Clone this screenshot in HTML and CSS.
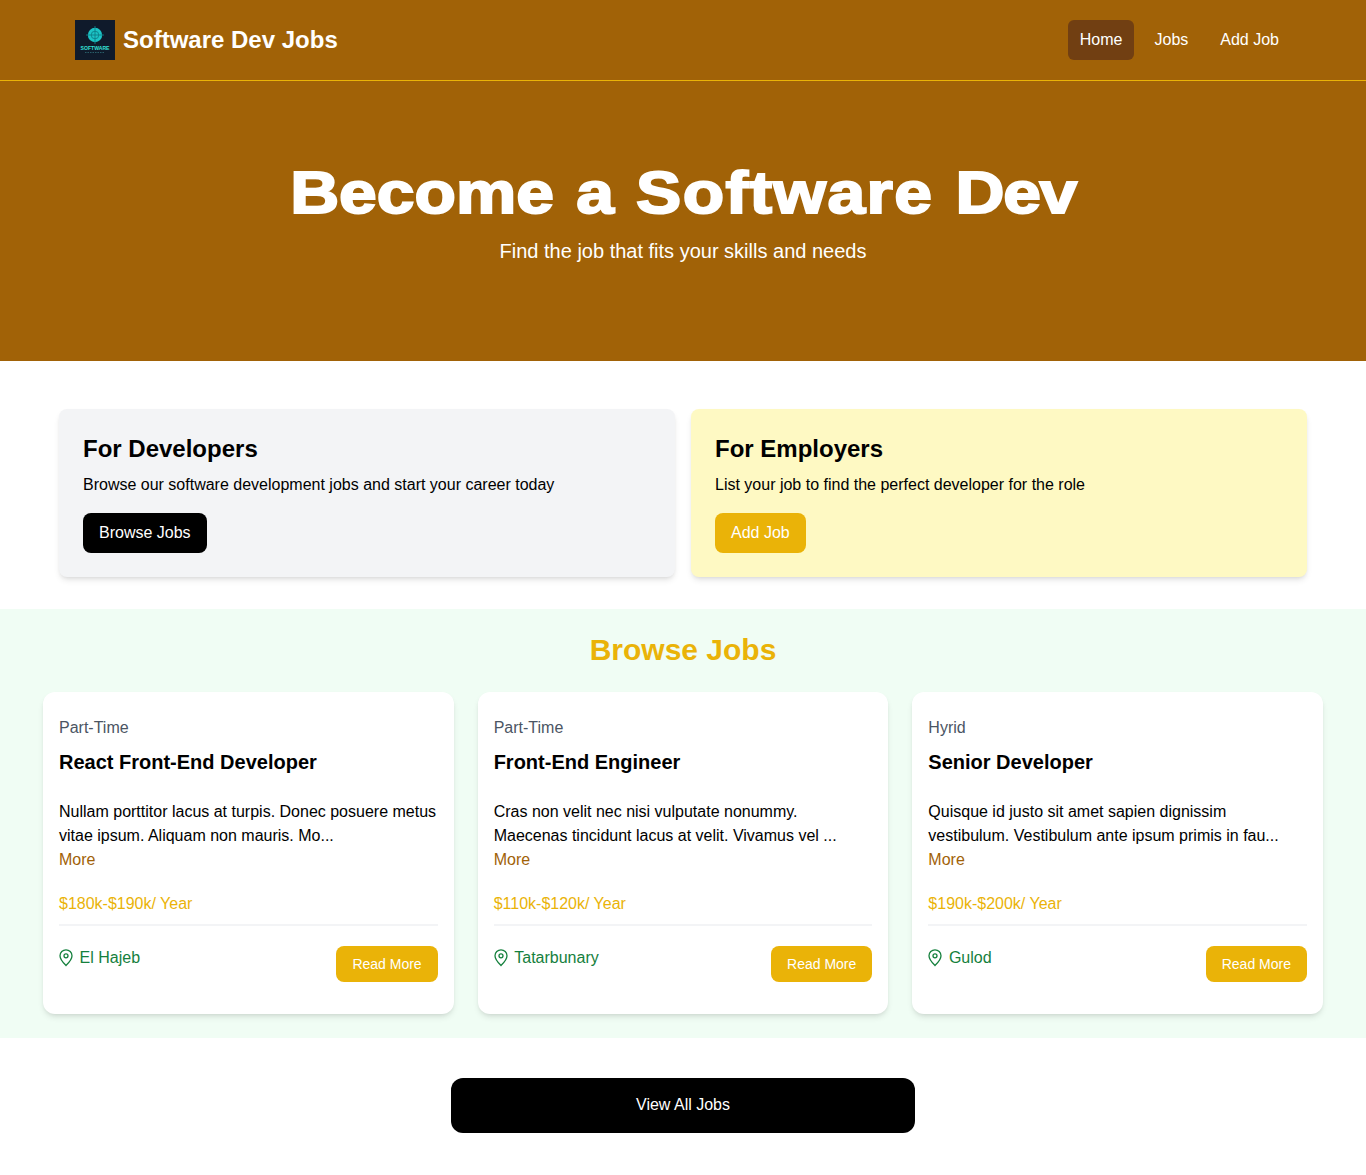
FILE: index.html
```html
<!DOCTYPE html>
<html lang="en">
<head>
  <meta charset="UTF-8">
  <title>Software Dev Jobs</title>
  <meta name="viewport" content="width=device-width, initial-scale=1.0">
  <link rel="stylesheet" href="styles.css">
</head>
<body>
  <nav class="navbar">
    <div class="nav-inner">
      <a class="brand" href="#">
        <svg class="logo" viewBox="0 0 40 40" width="40" height="40">
          <rect width="40" height="40" fill="#0f1a2b"/>
          <circle cx="20" cy="15" r="7.200" fill="#1cc4c6"/>
          <circle cx="20" cy="15" r="3.800" fill="none" stroke="#0d7f88" stroke-width="0.900"/>
          <path d="M20 6v18M11 15h18" stroke="#0d7f88" stroke-width="0.900"/>
          <text class="logo-text" x="20" y="29.500" text-anchor="middle" textLength="29" lengthAdjust="spacingAndGlyphs">SOFTWARE</text>
          <path d="M10 32.500h20" stroke="#2f6f78" stroke-width="0.800" stroke-dasharray="1.500 1"/>
        </svg>
        <span class="brand-name">Software Dev Jobs</span>
      </a>
      <div class="nav-links">
        <a class="nav-link active" href="#">Home</a>
        <a class="nav-link" href="#">Jobs</a>
        <a class="nav-link" href="#">Add Job</a>
      </div>
    </div>
  </nav>

  <section class="hero">
    <h1>Become a <span class="wide">Software</span> <span class="tight">Dev</span></h1>
    <p>Find the job that fits your skills and needs</p>
  </section>

  <section class="cards">
    <div class="info-card gray">
      <h2>For Developers</h2>
      <p>Browse our software development jobs and start your career today</p>
      <a class="btn btn-black" href="#">Browse Jobs</a>
    </div>
    <div class="info-card yellow">
      <h2>For Employers</h2>
      <p>List your job to find the perfect developer for the role</p>
      <a class="btn btn-yellow" href="#">Add Job</a>
    </div>
  </section>

  <section class="browse">
    <h2>Browse Jobs</h2>
    <div class="job-grid">
      <div class="job">
        <div class="job-type">Part-Time</div>
        <h3>React Front-End Developer</h3>
        <p class="job-desc">Nullam porttitor lacus at turpis. Donec posuere metus vitae ipsum. Aliquam non mauris. Mo...</p>
        <a class="more" href="#">More</a>
        <div class="salary">$180k-$190k/ Year</div>
        <div class="job-footer">
          <div class="location">
            <svg viewBox="0 0 14 18" width="14" height="18"><path d="M7 16.500C5.300 14.800 1 10.900 1 6.800a6 6 0 0 1 12 0c0 4.100-4.300 8-6 9.700z"/><circle cx="7" cy="6.800" r="2"/></svg>
            El Hajeb
          </div>
          <a class="read-more" href="#">Read More</a>
        </div>
      </div>
      <div class="job">
        <div class="job-type">Part-Time</div>
        <h3>Front-End Engineer</h3>
        <p class="job-desc">Cras non velit nec nisi vulputate nonummy. Maecenas tincidunt lacus at velit. Vivamus vel ...</p>
        <a class="more" href="#">More</a>
        <div class="salary">$110k-$120k/ Year</div>
        <div class="job-footer">
          <div class="location">
            <svg viewBox="0 0 14 18" width="14" height="18"><path d="M7 16.500C5.300 14.800 1 10.900 1 6.800a6 6 0 0 1 12 0c0 4.100-4.300 8-6 9.700z"/><circle cx="7" cy="6.800" r="2"/></svg>
            Tatarbunary
          </div>
          <a class="read-more" href="#">Read More</a>
        </div>
      </div>
      <div class="job">
        <div class="job-type">Hyrid</div>
        <h3>Senior Developer</h3>
        <p class="job-desc">Quisque id justo sit amet sapien dignissim vestibulum. Vestibulum ante ipsum primis in fau...</p>
        <a class="more" href="#">More</a>
        <div class="salary">$190k-$200k/ Year</div>
        <div class="job-footer">
          <div class="location">
            <svg viewBox="0 0 14 18" width="14" height="18"><path d="M7 16.500C5.300 14.800 1 10.900 1 6.800a6 6 0 0 1 12 0c0 4.100-4.300 8-6 9.700z"/><circle cx="7" cy="6.800" r="2"/></svg>
            Gulod
          </div>
          <a class="read-more" href="#">Read More</a>
        </div>
      </div>
    </div>
  </section>

  <section class="view-all">
    <a class="view-all-btn" href="#">View All Jobs</a>
  </section>
</body>
</html>
```

FILE: styles.css
```css
* {
  box-sizing: border-box;
  margin: 0;
  padding: 0;
}

body {
  font-family: "Liberation Sans", Arial, sans-serif;
  font-size: 16px;
  line-height: 24px;
  color: #000;
  background: #fff;
}

a {
  text-decoration: none;
  color: inherit;
}

.navbar {
  background: #a16207;
  border-bottom: 1px solid #eab308;
}

.nav-inner {
  max-width: 1280px;
  margin: 0 auto;
  padding: 0 32px;
  height: 80px;
  display: flex;
  align-items: center;
  justify-content: space-between;
}

.brand {
  display: flex;
  align-items: center;
}

.logo {
  display: block;
  margin-right: 8px;
}

.logo-text {
  font-family: "Liberation Sans", Arial, sans-serif;
  font-size: 5px;
  font-weight: 700;
  fill: #35e0d8;
}

.brand-name {
  color: #fff;
  font-size: 24px;
  line-height: 32px;
  font-weight: 700;
}

.nav-links {
  display: flex;
  gap: 8px;
}

.nav-link {
  color: #fff;
  padding: 8px 12px;
  border-radius: 6px;
}

.nav-link.active {
  background: #713f12;
}

.hero {
  background: #a16207;
  color: #fff;
  text-align: center;
  padding: 80px 16px 96px;
}

/* Arial Black look: the bold face widened and thickened */
.hero h1 {
  max-width: 760px;
  margin: 0 auto;
  font-size: 60px;
  line-height: 60px;
  font-weight: 800;
  padding-top: 2px;
  word-spacing: 3px;
  white-space: nowrap;
  -webkit-text-stroke: 2px #fff;
  transform: scaleX(1.13);
}

.hero h1 .wide {
  letter-spacing: 1.200px;
}

.hero h1 .tight {
  letter-spacing: -1.200px;
}

.hero p {
  margin-top: 14px;
  font-size: 20px;
  line-height: 28px;
}

.cards {
  max-width: 1280px;
  margin: 0 auto;
  padding: 48px 16px 32px;
  display: grid;
  grid-template-columns: 1fr 1fr;
  gap: 16px;
}

.info-card {
  padding: 24px;
  border-radius: 8px;
  box-shadow: 0 4px 6px -1px rgba(0,0,0,0.1), 0 2px 4px -2px rgba(0,0,0,0.1);
}

.info-card.gray {
  background: #f3f4f6;
}

.info-card.yellow {
  background: #fef9c3;
}

.info-card h2 {
  font-size: 24px;
  line-height: 32px;
  font-weight: 700;
}

.info-card p {
  margin: 8px 0 16px;
}

.btn {
  display: inline-block;
  color: #fff;
  padding: 8px 16px;
  border-radius: 8px;
}

.btn-black {
  background: #000;
}

.btn-yellow {
  background: #eab308;
}

.browse {
  background: #f0fdf4;
  padding: 23px 0 24px;
}

.browse > h2 {
  color: #eab308;
  font-size: 30px;
  line-height: 36px;
  font-weight: 700;
  text-align: center;
  margin-bottom: 24px;
}

.job-grid {
  max-width: 1280px;
  margin: 0 auto;
  display: grid;
  grid-template-columns: repeat(3, 1fr);
  gap: 24px;
}

.job {
  background: #fff;
  border-radius: 12px;
  padding: 16px;
  box-shadow: 0 4px 6px -1px rgba(0,0,0,0.1), 0 2px 4px -2px rgba(0,0,0,0.1);
}

.job-type {
  color: #4b5563;
  margin: 8px 0;
}

.job h3 {
  font-size: 20px;
  line-height: 28px;
  font-weight: 700;
  margin-bottom: 24px;
}

.more {
  display: block;
  color: #a16207;
  margin-bottom: 20px;
}

.salary {
  color: #eab308;
  margin-bottom: 8px;
}

.job-footer {
  border-top: 2px solid #f3f4f6;
  padding-top: 20px;
  display: flex;
  justify-content: space-between;
  align-items: flex-start;
  margin-bottom: 16px;
}

.location {
  display: flex;
  align-items: center;
  gap: 6.600px;
  color: #15803d;
}

.location svg {
  fill: none;
  stroke: #15803d;
  stroke-width: 1.300;
}

.read-more {
  background: #eab308;
  color: #fff;
  font-size: 14px;
  line-height: 20px;
  padding: 8px 16px;
  border-radius: 8px;
}

.view-all {
  max-width: 512px;
  margin: 40px auto;
  padding: 0 24px;
}

.view-all-btn {
  display: block;
  background: #000;
  color: #fff;
  text-align: center;
  padding: 15px 24px 16px;
  border-radius: 12px;
}
```
